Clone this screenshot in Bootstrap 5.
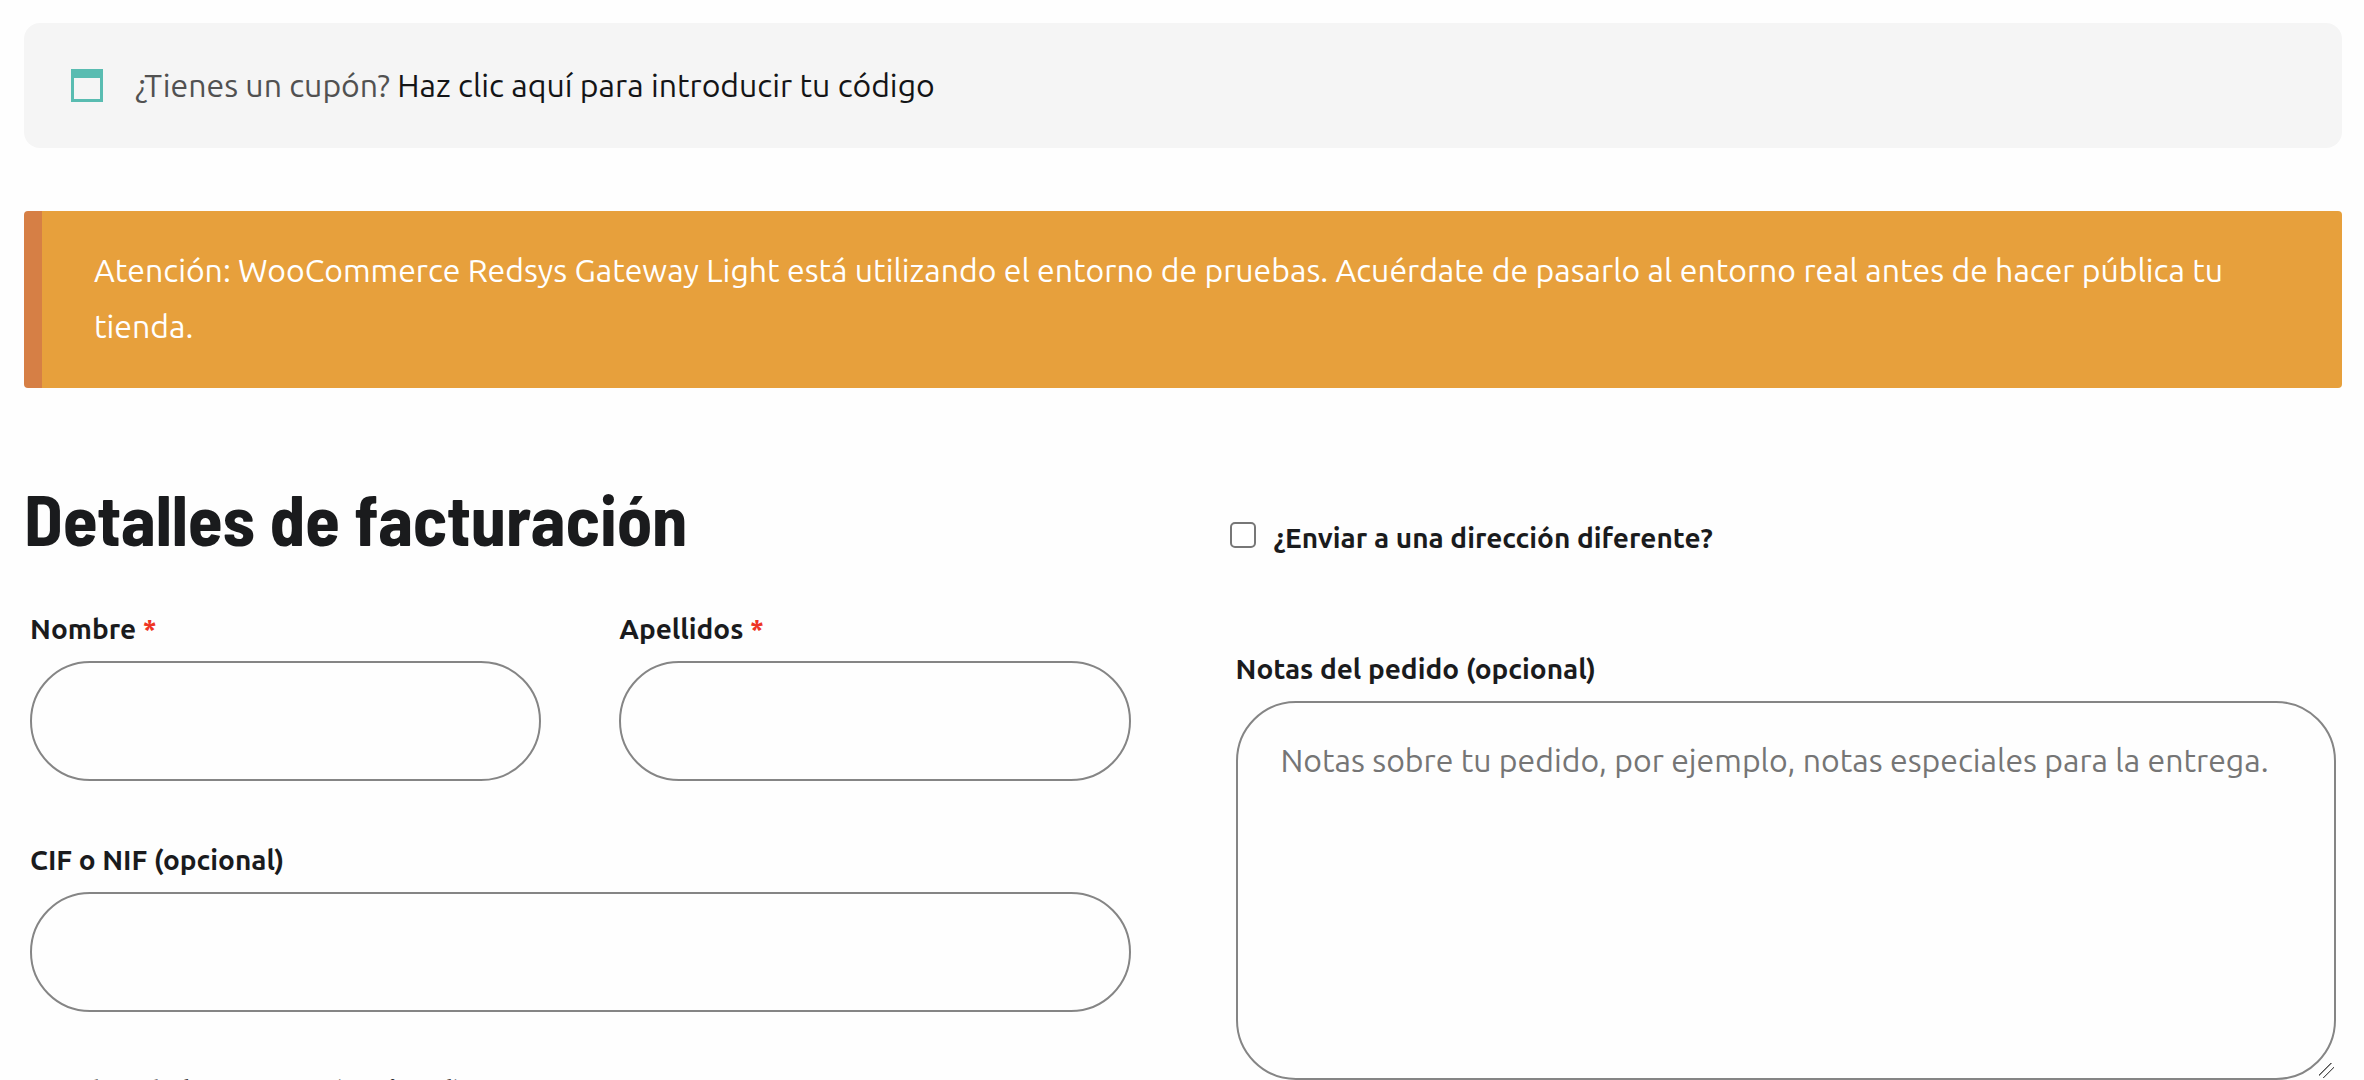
<!DOCTYPE html>
<html lang="es">
<head>
<meta charset="utf-8">
<meta name="viewport" content="width=device-width, initial-scale=1">
<title>Finalizar compra</title>
<link href="https://cdn.jsdelivr.net/npm/bootstrap@5.3.0/dist/css/bootstrap.min.css" rel="stylesheet">
<style>
  body { background: #fefefe; color: #1a1b1d; font-family: Ubuntu, "Noto Sans", sans-serif; font-size: 32px; line-height: 56px; }
  .checkout { padding: 23px 22px 48px 24px; }
  .coupon-bar { background: #f5f5f5; color: #515151; border-radius: 16px; padding: 34px 47px 35px; gap: 32px; margin-bottom: 63px; }
  .coupon-bar a { color: #131416; }
  .test-notice { background: #e7a03c; color: #fff; border: 0; border-left: 18px solid #d67f45; border-radius: 4px; padding: 31px 52px 34px; margin-bottom: 94px; }
  .columns { --bs-gutter-x: 93px; }
  .billing-title { font: 700 71px/72px "Barlow Semi Condensed", "Roboto Condensed", Roboto, sans-serif; margin-bottom: 54px; }
  .field-group { padding: 0 6px; }
  .names { --bs-gutter-x: 78px; }
  .form-label, .form-check-label { font-size: 28px; line-height: 42px; font-weight: 700; }
  .form-label { display: block; margin-bottom: 11px; }
  .required-mark { color: #ee3524; }
  .form-control { background: #fefefe; border: 2px solid #858585; border-radius: 60px; font-size: 32px; line-height: 56px; color: #1a1b1d; }
  input.form-control { height: 120px; padding: 0 42px; }
  .field-row { margin-bottom: 58px; }
  .ship-row { padding-top: 35px; gap: 18px; margin-bottom: 89px; }
  .ship-row .form-check-input { width: 26px; height: 26px; border: 2px solid #777; border-radius: 5px; margin: 0 0 6px; background-color: #fff; }
  textarea.form-control { height: 379px; padding: 29px 43px; resize: both; }
  textarea.form-control::-webkit-resizer { background: linear-gradient(135deg, transparent 37%, #555 38% 43%, transparent 44% 60%, #555 61% 66%, transparent 67%); }
  .form-control::placeholder { color: #757575; opacity: 1; }
</style>
<script src="https://cdn.jsdelivr.net/npm/bootstrap@5.3.0/dist/js/bootstrap.bundle.min.js" defer></script>
</head>
<body>
<main class="container-fluid checkout">
  <div class="coupon-bar d-flex align-items-center">
    <svg width="32" height="33" viewBox="0 0 32 33" aria-hidden="true"><path fill="#59bcb1" fill-rule="evenodd" d="M0 0h32v33H0zM3 9v21h26V9z"/></svg>
    <span>¿Tienes un cupón? <a href="#cupon" class="text-decoration-none">Haz clic aquí para introducir tu código</a></span>
  </div>

  <div class="alert test-notice" role="alert">Atención: WooCommerce Redsys Gateway Light está utilizando el entorno de pruebas. Acuérdate de pasarlo al entorno real antes de hacer pública tu tienda.</div>

  <form>
    <div class="row columns">
      <div class="col-lg-6">
        <h3 class="billing-title">Detalles de facturación</h3>
        <div class="field-group">
          <div class="row names field-row">
            <div class="col-6">
              <label class="form-label" for="nombre">Nombre <span class="required-mark">*</span></label>
              <input type="text" class="form-control" id="nombre" required>
            </div>
            <div class="col-6">
              <label class="form-label" for="apellidos">Apellidos <span class="required-mark">*</span></label>
              <input type="text" class="form-control" id="apellidos" required>
            </div>
          </div>
          <div class="field-row">
            <label class="form-label" for="nif">CIF o NIF (opcional)</label>
            <input type="text" class="form-control" id="nif">
          </div>
          <div class="field-row">
            <label class="form-label" for="empresa">Nombre de la empresa (opcional)</label>
            <input type="text" class="form-control" id="empresa">
          </div>
        </div>
      </div>
      <div class="col-lg-6">
        <div class="ship-row d-flex align-items-center">
          <input type="checkbox" class="form-check-input" id="enviar">
          <label class="form-check-label" for="enviar">¿Enviar a una dirección diferente?</label>
        </div>
        <div class="field-group">
          <label class="form-label" for="notas">Notas del pedido (opcional)</label>
          <textarea class="form-control" id="notas" placeholder="Notas sobre tu pedido, por ejemplo, notas especiales para la entrega."></textarea>
        </div>
      </div>
    </div>
  </form>
</main>
</body>
</html>
